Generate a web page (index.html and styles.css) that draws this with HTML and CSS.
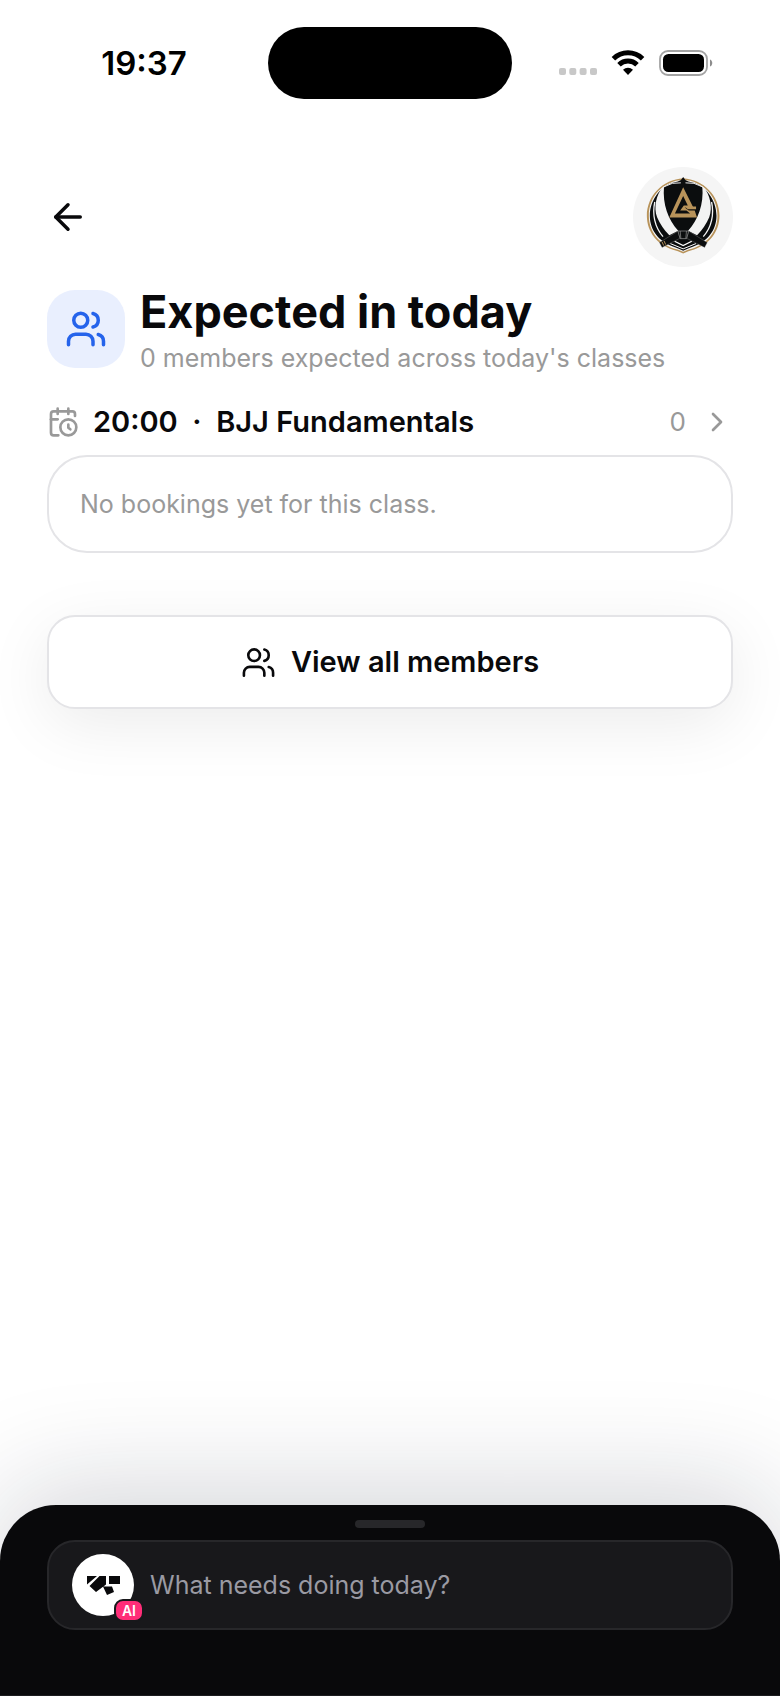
FILE: index.html
```html
<!DOCTYPE html>
<html lang="en">
<head>
<meta charset="utf-8">
<meta name="viewport" content="width=device-width, initial-scale=1">
<title>Expected in today</title>
<link rel="stylesheet" href="styles.css">
</head>
<body>
<svg class="defs" aria-hidden="true">
  <symbol id="users" viewBox="0 0 24 24">
    <path d="M16 21v-2a4 4 0 0 0-4-4H6a4 4 0 0 0-4 4v2"/>
    <circle cx="9" cy="7" r="4"/>
    <path d="M16 3.13a4 4 0 0 1 0 7.75"/>
    <path d="M22 21v-2a4 4 0 0 0-3-3.87"/>
  </symbol>
</svg>
<div class="screen">
  <div class="status">
    <time class="status-time">19:37</time>
    <div class="island"></div>
    <div class="status-icons">
      <svg class="dots" viewBox="0 0 38 26" aria-hidden="true"><g fill="#c8c8c8"><rect x="0" y="18" width="7" height="7" rx="2"/><rect x="10.3" y="18" width="7" height="7" rx="2"/><rect x="20.6" y="18" width="7" height="7" rx="2"/><rect x="31" y="18" width="7" height="7" rx="2"/></g></svg>
      <svg class="wifi" viewBox="0 0 34 26" aria-hidden="true"><g fill="none" stroke="#000" stroke-width="5"><path d="M2.4 8.700a21 21 0 0 1 29.2 0"/><path d="M8 14.700a13 13 0 0 1 18 0"/></g><path d="M17 25l-5-5.200a7.400 7.400 0 0 1 10 0z"/></svg>
      <svg class="battery" viewBox="0 0 54 26" aria-hidden="true"><rect x="1" y="1" width="47" height="24" rx="8" fill="none" stroke="#a3a3a3" stroke-width="1.8"/><rect x="4" y="4" width="41" height="18" rx="5.5"/><path d="M51 9.500c3 1 3 6 0 7z" fill="#8c8c8c"/></svg>
    </div>
  </div>

  <header class="topbar">
    <button class="back" type="button" aria-label="Back">
      <svg viewBox="0 0 24 24"><path d="m12 19-7-7 7-7"/><path d="M19 12H5"/></svg>
    </button>
    <button class="club" type="button" aria-label="Club profile">
      <svg viewBox="37 36 303 303">
        <path d="M189 70C250 74 299 122 299 184c0 51-34 88-77 102q-18 4-33 12-15-8-33-12C113 272 79 235 79 184 79 122 128 74 189 70z" fill="#b8935a"/>
        <path d="M189 75C248 79 293 124 293 184c0 48-31 84-73 98q-17 4-31 11-14-7-31-11C116 268 85 232 85 184 85 124 130 79 189 75z" fill="#f5f5f5"/>
        <path d="M189 66q5 11 16 14C254 88 290 133 290 184c0 46-30 79-70 93q-16 5-31 13-15-8-31-13C118 263 88 230 88 184 88 133 124 88 173 80q11-3 16-14z" fill="#0b0d0e"/>
        <path d="M127 97C107 120 99 158 110 188Q123 218 147 243L174 229C144 196 126 150 131 94z" fill="#f3f3f3"/>
        <path d="M251 97C271 120 279 158 268 188Q255 218 231 243L204 229C234 196 252 150 247 94z" fill="#f3f3f3"/>
        <path d="M103 142C95 178 102 218 128 247M275 142C283 178 276 218 250 247" fill="none" stroke="#f3f3f3" stroke-width="4"/>
        <path d="M131 96Q156 81 182 84M247 96Q222 81 196 84" fill="none" stroke="#eee" stroke-width="3"/>
        <path d="M150 268l39 16 39-16" fill="none" stroke="#fff" stroke-width="3"/>
        <path d="M163 261l26 13 26-13" fill="none" stroke="#fff" stroke-width="4"/>
        <path d="M174 230L117 265l8 15 54-28zM205 230l57 35-8 15-54-28z" fill="#0b0d0e" stroke="#999" stroke-width="1"/>
        <path d="M173 230h33l-7 23h-19zM180 230l2 23M199 230l-2 23" fill="#0b0d0e" stroke="#999" stroke-width="2"/>
        <path d="M125 263l5 11M131 260l5 11" stroke="#b8935a" stroke-width="3"/>
        <path fill-rule="evenodd" d="M189 97L147 189H231L224 168H206L194 159H228L219 157zM189 124L164 177H210L199 168H180L191 153H203z" fill="#b8935a"/>
        <path d="M194 156H228V164H203z" fill="#b8935a"/>
      </svg>
    </button>
  </header>

  <main class="content">
    <section class="intro">
      <div class="tile"><svg aria-hidden="true"><use href="#users"/></svg></div>
      <div class="intro-text">
        <h1>Expected in today</h1>
        <p>0 members expected across today's classes</p>
      </div>
    </section>

    <button class="class-row" type="button">
      <svg viewBox="0 0 24 24" aria-hidden="true"><path d="M21 7.500V6a2 2 0 0 0-2-2H5a2 2 0 0 0-2 2v14a2 2 0 0 0 2 2h3.500"/><path d="M16 2v4"/><path d="M8 2v4"/><path d="M3 10h5"/><path d="M17.500 17.500 16 16.300V14"/><circle cx="16" cy="16" r="6"/></svg>
      <span class="class-name">20:00 &nbsp;·&nbsp; BJJ Fundamentals</span>
      <span class="count">0</span>
      <svg viewBox="0 0 24 24" aria-hidden="true"><path d="m9 18 6-6-6-6"/></svg>
    </button>
    <p class="empty">No bookings yet for this class.</p>

    <button class="view-all" type="button">
      <svg aria-hidden="true"><use href="#users"/></svg>
      <span>View all members</span>
    </button>
  </main>

  <footer class="sheet">
    <div class="handle"></div>
    <label class="prompt">
      <span class="assistant">
        <svg viewBox="0 0 62 62" aria-hidden="true"><path d="M15 22h10l-10 8.500zM27.500 22h6.500v8.500L24 38l-6.500-6zM37 22h11v8h-11zM31 32.500h9l2 5.500-7 3z" fill="#09090b"/></svg>
        <span class="ai">AI</span>
      </span>
      <input type="text" placeholder="What needs doing today?" aria-label="What needs doing today?">
    </label>
  </footer>
</div>
</body>
</html>
```
FILE: styles.css
```css
* { box-sizing: border-box; }

body {
  margin: 0;
  background: #fff;
  color: #09090b;
  font-family: Inter, "Liberation Sans", sans-serif;
}

button {
  padding: 0;
  border: 0;
  background: none;
  color: inherit;
  font: inherit;
  cursor: pointer;
}

h1, p { margin: 0; }

svg {
  display: block;
  flex: none;
}

.defs {
  position: absolute;
  width: 0;
  height: 0;
}

.screen {
  display: flex;
  flex-direction: column;
  min-height: 100vh;
  overflow: hidden;
}

.status {
  display: grid;
  grid-template-columns: 1fr 244px 1fr;
  align-items: center;
  padding-top: 27px;
}

.status-time {
  padding-left: 20px;
  color: #000;
  font-size: 33px;
  font-weight: 600;
  line-height: 40px;
  text-align: center;
}

.island {
  height: 72px;
  border-radius: 36px;
  background: #000;
}

.status-icons {
  display: flex;
  gap: 14px;
  padding-left: 47px;
}

.status-icons svg { height: 26px; }
.dots { width: 38px; }
.wifi { width: 34px; }
.battery { width: 54px; }

.topbar {
  display: flex;
  align-items: center;
  justify-content: space-between;
  padding: 68px 47px 0;
}

.back svg {
  width: 42px;
  height: 42px;
}

.back svg,
.tile svg,
.class-row svg,
.view-all svg {
  fill: none;
  stroke: currentColor;
  stroke-width: 2;
  stroke-linecap: round;
  stroke-linejoin: round;
}

.club {
  width: 100px;
  height: 100px;
  border-radius: 50%;
  background: #f5f5f5;
}

.club svg {
  width: 100%;
  height: 100%;
}

.content {
  display: flex;
  flex: 1;
  flex-direction: column;
  padding: 23px 47px 80px;
}

.intro {
  display: flex;
  align-items: flex-start;
  gap: 15px;
}

.tile {
  display: grid;
  flex: none;
  place-items: center;
  width: 78px;
  height: 78px;
  border-radius: 28px;
  background: #e9effe;
  color: #2563eb;
}

.tile svg {
  width: 42px;
  height: 42px;
}

.intro h1 {
  font-size: 45px;
  font-weight: 700;
  line-height: 44px;
}

.intro p {
  margin-top: 6px;
  color: #999;
  font-size: 25px;
  line-height: 36px;
}

.class-row {
  display: flex;
  align-items: center;
  margin-top: 28px;
  text-align: left;
  line-height: 36px;
}

.class-row svg {
  width: 32px;
  height: 32px;
  color: #999;
}

.class-name {
  flex: 1;
  padding-left: 14px;
  font-size: 29px;
  font-weight: 600;
}

.count {
  padding-right: 15px;
  color: #999;
  font-size: 26px;
}

.empty {
  margin-top: 15px;
  padding: 30px 31px;
  border: 2px solid #e4e4e7;
  border-radius: 40px;
  color: #999;
  font-size: 25px;
  line-height: 34px;
}

.view-all {
  display: flex;
  align-items: center;
  justify-content: center;
  gap: 15px;
  margin-top: 62px;
  padding: 27px;
  border: 2px solid #e4e4e7;
  border-radius: 28px;
  background: #fff;
  box-shadow: 0 16px 64px rgba(9, 9, 11, 0.08);
  font-size: 29px;
  font-weight: 600;
  line-height: 36px;
}

.view-all svg {
  width: 35px;
  height: 35px;
  stroke-width: 1.8;
}

.sheet {
  padding: 15px 47px 65px;
  border-bottom: 1px solid #1c1c1f;
  border-radius: 56px 56px 0 0;
  background: #09090b;
  box-shadow: 0 -16px 112px rgba(15, 23, 42, 0.18);
}

.handle {
  width: 70px;
  height: 8px;
  margin: 0 auto 12px;
  border-radius: 4px;
  background: #27272a;
}

.prompt {
  display: flex;
  align-items: center;
  gap: 16px;
  padding: 11px 23px;
  border: 2px solid #27272a;
  border-radius: 28px;
  background: #18181b;
}

.assistant {
  position: relative;
  flex: none;
  width: 62px;
  height: 62px;
  margin: 1px 0;
  border-radius: 50%;
  background: #fff;
}

.ai {
  position: absolute;
  right: -10px;
  bottom: -6px;
  padding: 0 6px;
  border: 2px solid #18181b;
  border-radius: 9px;
  background: #ff2d78;
  color: #fff;
  font-size: 14px;
  font-weight: 600;
  line-height: 19px;
}

.prompt input {
  flex: 1;
  min-width: 0;
  padding: 0;
  border: 0;
  outline: 0;
  background: none;
  color: #fff;
  font: inherit;
  font-size: 25px;
  line-height: 36px;
}

.prompt input::placeholder {
  color: #9a9aa3;
  opacity: 1;
}
```
